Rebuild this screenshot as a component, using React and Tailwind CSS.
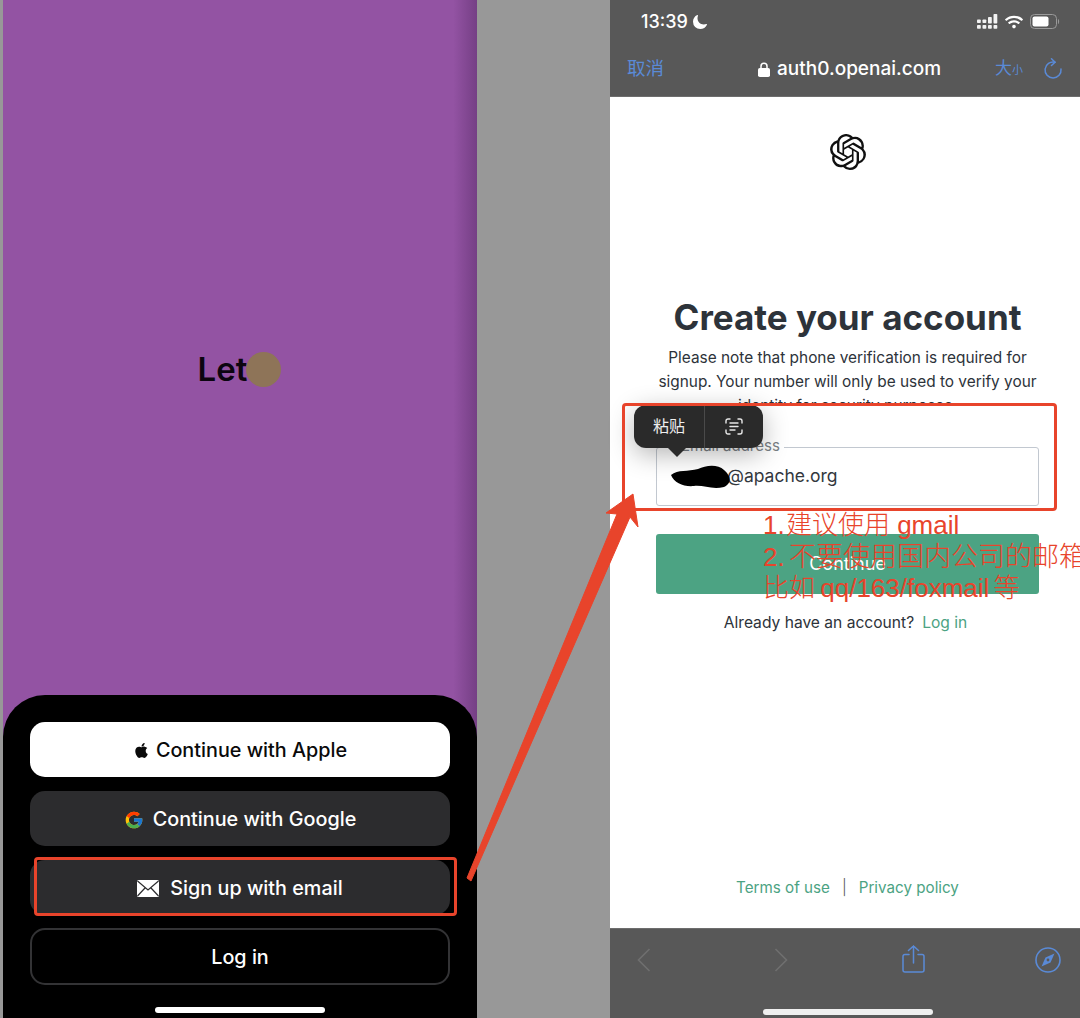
import React from "react";
import { SiOpenai } from "react-icons/si";
import { FaApple, FaWifi } from "react-icons/fa";
import { FcGoogle } from "react-icons/fc";
import { IoMoon } from "react-icons/io5";

const font = { inter: "font-['Inter','Noto_Sans_CJK_SC',sans-serif]" };

const SheetButton = ({ className, children }) => {
  return (
    <div className={`h-[55px] rounded-[15px] flex items-center justify-center pt-[2px] text-[19.800px] font-medium ${className}`}>
      {children}
    </div>
  );
};

const MailIcon = () => (
  <svg width="22" height="17" viewBox="0 0 22 17" className="mr-[11px]">
    <rect width="22" height="17" rx="1.5" fill="#fff" />
    <path d="M0.5 1 L11 10 L21.5 1 M0.5 16 L8 8 M21.5 16 L14 8" fill="none" stroke="#2c2c2e" strokeWidth="1.2" />
  </svg>
);

const SignalIcon = () => (
  <svg width="21" height="15" viewBox="0 0 21 15" fill="#f2f2f2">
    <rect x="0" y="5.500" width="3.800" height="3.500" rx="0.8" />
    <rect x="0" y="11" width="3.800" height="3.800" rx="0.8" />
    <rect x="5.500" y="5.500" width="3.800" height="3.500" rx="0.8" />
    <rect x="5.500" y="11" width="3.800" height="3.800" rx="0.8" />
    <rect x="11" y="3" width="3.800" height="6.600" rx="0.8" />
    <rect x="11" y="11" width="3.800" height="3.800" rx="0.8" />
    <rect x="16.500" y="0" width="3.800" height="9.600" rx="0.8" />
    <rect x="16.500" y="11" width="3.800" height="3.800" rx="0.8" />
  </svg>
);

const BatteryIcon = () => (
  <svg width="30" height="15" viewBox="0 0 30 15">
    <rect x="0.5" y="0.5" width="26" height="14" rx="4" fill="none" stroke="#9a9a9a" />
    <rect x="2.5" y="2.5" width="16" height="10" rx="2" fill="#fff" />
    <path d="M28 5 V10 C29.5 9.5 29.5 5.5 28 5Z" fill="#9a9a9a" />
  </svg>
);

const LockIcon = () => (
  <svg width="12" height="15" viewBox="0 0 12 15" fill="#fff">
    <path d="M3 7 V4.2 a3 3 0 0 1 6 0 V7" fill="none" stroke="#fff" strokeWidth="1.5" />
    <rect y="6" width="12" height="9" rx="1.8" />
  </svg>
);

const ReloadIcon = () => (
  <svg width="20" height="22" viewBox="0 0 20 22" fill="none" stroke="#5a8ad6" strokeWidth="1.5" strokeLinecap="round">
    <path d="M12 4.2 A8 8 0 1 0 18 11" />
    <path d="M8.5 0.8 L12 4.2 L8.5 7.5" />
  </svg>
);

const ScanIcon = () => (
  <svg width="18" height="17" viewBox="0 0 18 17" fill="none" stroke="#e8e8e8" strokeWidth="1.4" strokeLinecap="round">
    <path d="M5 1 H3 a2 2 0 0 0 -2 2 V5 M13 1 H15 a2 2 0 0 1 2 2 V5 M5 16 H3 a2 2 0 0 1 -2 -2 V12 M13 16 H15 a2 2 0 0 0 2 -2 V12" />
    <path d="M5 5 H13 M5 8.5 H13 M5 12 H10" />
  </svg>
);

const ChevronIcon = ({ flip, className = "" }) => (
  <svg width="14" height="24" viewBox="0 0 14 24" fill="none" stroke="#6f6f6f" strokeWidth="1.6" className={`${flip ? "rotate-180" : ""} ${className}`}>
    <path d="M12.5 1 L1.5 12 L12.5 23" />
  </svg>
);

const ShareIcon = () => (
  <svg width="23" height="28" viewBox="0 0 23 28" fill="none" stroke="#5a8ad6" strokeWidth="1.5" strokeLinecap="round" className="mt-[16px] ml-[114px]">
    <path d="M7 9.5 H3 a2 2 0 0 0 -2 2 V25 a2 2 0 0 0 2 2 H20 a2 2 0 0 0 2 -2 V11.500 a2 2 0 0 0 -2 -2 H16" />
    <path d="M11.500 18 V1 M6.500 5.500 L11.500 1 L16.500 5.500" />
  </svg>
);

const CompassIcon = () => (
  <svg width="26" height="26" viewBox="0 0 26 26" className="mt-[18px] ml-[110px]">
    <circle cx="13" cy="13" r="12" fill="none" stroke="#5a8ad6" strokeWidth="1.6" />
    <path d="M19.500 6.500 L15.500 15.500 L6.500 19.500 L10.500 10.500 Z" fill="#5a8ad6" />
    <circle cx="13" cy="13" r="1.400" fill="#585858" />
  </svg>
);

const App = () => {
  return (
    <div className={`relative flex w-[1080px] h-[1018px] overflow-hidden bg-[#989898] ${font.inter}`}>
      {/* left phone */}
      <div className="ml-[3px] w-[474px] h-full flex flex-col bg-[linear-gradient(to_right,#9353a3_95%,#753f85)]">
        <div className="h-[695px] flex items-center justify-center">
          <div className="flex items-center mr-[1px] mt-[43px]">
            <span className="text-[33px] font-semibold text-[#0c0510] leading-none">Let</span>
            <span className="w-[35px] h-[35px] rounded-full bg-[#8e7458] -ml-[1px]" />
          </div>
        </div>
        <div className="flex-1 bg-black rounded-t-[42px] pt-[27px] px-[27px] flex flex-col">
          <div className="flex flex-col gap-[14px]">
            <SheetButton className="bg-white text-[#0a0a0a]">
              <FaApple size={17} className="mr-[6px]" />
              Continue with Apple
            </SheetButton>
            <SheetButton className="bg-[#2c2c2e] text-white">
              <FcGoogle size={20} className="mr-[9px]" />
              Continue with Google
            </SheetButton>
            <SheetButton className="bg-[#2c2c2e] text-white">
              <MailIcon />
              Sign up with email
            </SheetButton>
            <SheetButton className="border-2 border-[#333335] text-white h-[57px] -mt-[1px]">Log in</SheetButton>
          </div>
          <div className="mt-auto mb-[5px] mx-auto w-[170px] h-[6px] rounded-full bg-white" />
        </div>
      </div>

      {/* right phone */}
      <div className="ml-[133px] w-[470px] h-full flex flex-col bg-white">
        <div className="h-[97px] bg-[#585858] border-b border-[#6d6d6d] text-white">
          <div className="h-[43px] flex items-center justify-between pl-[31px] pr-[20px]">
            <div className="flex items-center gap-[4px] text-[18px] font-medium">
              13:39
              <IoMoon size={16} />
            </div>
            <div className="flex items-center gap-[7px]">
              <SignalIcon />
              <FaWifi size={18} />
              <BatteryIcon />
            </div>
          </div>
          <div className="h-[52px] flex items-center pl-[17px] pr-[17px]">
            <span className="text-[#5a8ad6] text-[18.500px] w-[131px]">取消</span>
            <LockIcon />
            <span className="ml-[7px] text-[19px] font-medium">auth0.openai.com</span>
            <span className="ml-auto text-[#5a8ad6] text-[17px] flex items-center mr-[20px]">
              大<span className="text-[11px] mt-[3px]">小</span>
            </span>
            <ReloadIcon />
          </div>
        </div>

        <div className="flex-1 flex flex-col items-center text-[#2d333a] pl-[5px]">
          <SiOpenai size={36} className="mt-[37px] text-[#111]" />
          <h1 className="mt-[125px] text-[35px] leading-[44px] font-bold">Create your account</h1>
          <p className="mt-[7px] text-[15.400px] leading-[24px] text-center">
            Please note that phone verification is required for
            <br />
            signup. Your number will only be used to verify your
          </p>
          <div className="h-[10px] overflow-hidden text-[15.400px] leading-[24px]">identity for security purposes.</div>

          <div className="relative mt-[43px] w-[383px] h-[59px] border border-[#c2c8d0] rounded-[3px] flex items-center pl-[16px] pb-[1px] text-[17.500px]">
            <span className="absolute -top-[11px] left-[20px] px-[4px] bg-white text-[15px] leading-[18px] text-[#7a7f85]">
              Email address
            </span>
            <span className="text-[#33383e] pl-[54px]">@apache.org</span>
          </div>
          <div className="mt-[28px] w-[383px] h-[60px] rounded-[3px] bg-[#4ca383] text-white text-[18px] flex items-center justify-center pb-[2px]">
            Continue
          </div>
          <p className="mt-[19px] mr-[4px] text-[15.600px] leading-[20px]">
            Already have an account?
            <span className="ml-[8px] text-[#4ca383]">Log in</span>
          </p>
          <div className="mt-auto mb-[28px] flex items-center text-[15.200px] text-[#4ca383]">
            Terms of use
            <span className="mx-[12px] text-[#555] font-light">|</span>
            Privacy policy
          </div>
        </div>

        <div className="relative h-[90px] bg-[#585858] border-t border-[#6d6d6d] flex items-start pl-[27px]">
          <ChevronIcon className="mt-[19px]" />
          <ChevronIcon flip className="mt-[19px] ml-[123px]" />
          <ShareIcon />
          <CompassIcon />
          <div className="absolute bottom-[3px] left-[153px] w-[170px] h-[6px] rounded-full bg-[#efefef]" />
        </div>
      </div>

      {/* paste popup */}
      <div className="absolute left-[634px] top-[405px] w-[129px] h-[43px] rounded-[12px] bg-[#2a2a2a] text-[#eee] text-[16px] flex items-center shadow-[0_6px_26px_rgba(0,0,0,0.3)]">
        <span className="w-[71px] text-center border-r border-[#4a4a4a] leading-[43px]">粘贴</span>
        <span className="flex-1 flex justify-center"><ScanIcon /></span>
        <span className="absolute top-[42px] left-[33px] w-0 h-0 border-x-[10px] border-x-transparent border-t-[10px] border-t-[#2a2a2a]" />
      </div>

      {/* annotations drawn over the screenshot */}
      <svg width="70" height="30" viewBox="0 0 70 30" className="absolute left-[668px] top-[463px]">
        <path d="M3 12 C10 6 20 9 30 6 C38 2 50 1 56 7 C62 12 65 20 56 24 C44 27 36 22 26 23 C16 24 6 20 3 12Z" fill="#000" />
      </svg>
      <div className="absolute left-[622px] top-[403px] w-[435px] h-[108px] border-[3px] border-[#e8442b] rounded-[4px]" />
      <div className="absolute left-[34px] top-[857px] w-[423px] h-[59px] border-[3px] border-[#e8442b] rounded-[4px]" />
      <svg width="1080" height="1018" viewBox="0 0 1080 1018" className="absolute left-0 top-0 pointer-events-none">
        <polygon points="467,878 617,514 606,513 633,494 638,527 630,517 471,881" fill="#e8442b" stroke="#e8442b" strokeWidth="1" strokeLinejoin="round" />
      </svg>
      <div className="absolute left-[763px] top-[510px] text-[#e8442b] text-[26px] leading-[31.500px] font-light font-['Liberation_Sans','Noto_Sans_CJK_SC',sans-serif] whitespace-nowrap">
        <div><span className="mr-[-6px]">1. </span>建议使用 gmail</div>
        <div><span className="mr-[-3px]">2. </span><span className="text-[27px]">不要使用国内公司的邮箱</span></div>
        <div><span className="mr-[-2px]">比如 </span>qq/163/foxmail<span className="ml-[-3px]"> 等</span></div>
      </div>
    </div>
  );
};

export default App;
